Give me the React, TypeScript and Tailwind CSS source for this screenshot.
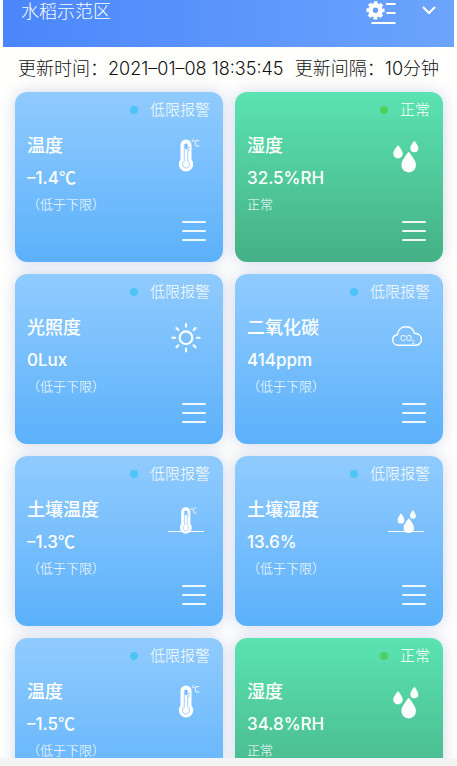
import React from "react";

type IconKind = "thermometer" | "drops" | "sun" | "co2" | "soilThermometer" | "soilDrops";

interface Sensor {
  id: number;
  name: string;
  value: string;
  unit: string;
  note: string;
  status: string;
  ok: boolean;
  icon: IconKind;
}

const sensors: Sensor[] = [
  { id: 1, name: "温度", value: "–1.4", unit: "℃", note: "（低于下限）", status: "低限报警", ok: false, icon: "thermometer" },
  { id: 2, name: "湿度", value: "32.5", unit: "%RH", note: "正常", status: "正常", ok: true, icon: "drops" },
  { id: 3, name: "光照度", value: "0", unit: "Lux", note: "（低于下限）", status: "低限报警", ok: false, icon: "sun" },
  { id: 4, name: "二氧化碳", value: "414", unit: "ppm", note: "（低于下限）", status: "低限报警", ok: false, icon: "co2" },
  { id: 5, name: "土壤温度", value: "–1.3", unit: "℃", note: "（低于下限）", status: "低限报警", ok: false, icon: "soilThermometer" },
  { id: 6, name: "土壤湿度", value: "13.6", unit: "%", note: "（低于下限）", status: "低限报警", ok: false, icon: "soilDrops" },
  { id: 7, name: "温度", value: "–1.5", unit: "℃", note: "（低于下限）", status: "低限报警", ok: false, icon: "thermometer" },
  { id: 8, name: "湿度", value: "34.8", unit: "%RH", note: "正常", status: "正常", ok: true, icon: "drops" },
];

function Thermometer() {
  return (
    <>
      <path d="M14.5 10a5.5 5.5 0 0 1 11 0v14.6a7.2 7.2 0 1 1-11 0z" fill="#fff" />
      <path d="M18.3 10.5a1.7 1.7 0 0 1 3.4 0v15.7a3.6 3.6 0 1 1-3.4 0z" fill="none" stroke="#78bdfb" strokeWidth="0.7" />
      <path d="M20 10v3" stroke="#78bdfb" strokeWidth="2.4" strokeLinecap="round" />
      <path d="M22 12.5h2M22 15h2" stroke="#78bdfb" strokeWidth="0.8" />
      <text x="25.5" y="11.2" fontSize="8" fill="#fff" className="font-['Noto_Sans_CJK_SC',sans-serif]">
        ℃
      </text>
    </>
  );
}

function SensorIcon({ kind }: { kind: IconKind }) {
  return (
    <svg viewBox="0 0 40 40" className="size-10" aria-hidden="true">
      {kind === "thermometer" && <Thermometer />}
      {kind === "soilThermometer" && (
        <>
          <path d="M2 32.5h36" stroke="#fff" strokeWidth="1.2" />
          <g transform="translate(3.2 4.4) scale(0.83)">
            <Thermometer />
          </g>
        </>
      )}
      {kind === "drops" && (
        <g fill="#fff">
          <path d="M12 10c1.6 2.2 4.7 5.6 4.7 8.7a4.7 4.7 0 0 1-9.4 0c0-3.1 3.1-6.5 4.7-8.7z" />
          <path d="M28.3 5.7c1.4 1.9 4 4.9 4 7.6a4 4 0 0 1-8 0c0-2.7 2.6-5.7 4-7.6z" />
          <path d="M22.7 16.7c2.5 3.4 7.3 8.7 7.3 13.4a7.3 7.3 0 0 1-14.6 0c0-4.7 4.8-10 7.3-13.4z" />
        </g>
      )}
      {kind === "soilDrops" && (
        <g fill="#fff">
          <path d="M2 32.5h36" stroke="#fff" strokeWidth="1.2" />
          <path d="M15 14.3c1.2 1.7 3.4 4.4 3.4 6.9a3.4 3.4 0 0 1-6.8 0c0-2.5 2.2-5.2 3.4-6.9z" />
          <path d="M26.9 11c1 1.4 2.9 3.7 2.9 5.8a2.9 2.9 0 0 1-5.8 0c0-2.1 1.9-4.4 2.9-5.8z" />
          <path d="M22.8 19.3c1.8 2.5 5.2 6.2 5.2 9.6a5.2 5.2 0 0 1-10.4 0c0-3.4 3.4-7.1 5.2-9.6z" />
        </g>
      )}
      {kind === "sun" && (
        <g fill="none" stroke="#fff" strokeWidth="2.1" strokeLinecap="round">
          <circle cx="20" cy="20.7" r="6.3" />
          <path d="M20 7v2.8M20 31.6v2.8M6.3 20.7h2.8M30.9 20.7h2.8M10.4 11.1l2 2M27.6 28.3l2 2M10.4 30.3l2-2M27.6 13.1l2-2" />
        </g>
      )}
      {kind === "co2" && (
        <>
          <path
            d="M12.5 28.3c-3.4 0-5.8-2.3-5.8-5.3 0-2.9 2-5 4.700-5.300C12 12.800 15.500 9.700 20 9.700c4.200 0 7.500 2.500 8.500 6.600 4 .1 6.900 2.600 6.900 6.100 0 3.400-2.600 5.900-6 5.900z"
            fill="none"
            stroke="#fff"
            strokeWidth="1.4"
          />
          <text x="14" y="24.2" fontSize="8" fill="#fff">CO</text>
          <text x="25.5" y="26.5" fontSize="5" fill="#fff">2</text>
        </>
      )}
    </svg>
  );
}

function SensorCard({ sensor }: { sensor: Sensor }) {
  const surface = sensor.ok ? "from-[#5be3b1] to-[#45b086]" : "from-[#90cbfe] to-[#5bb1fb]";
  return (
    <article
      className={`relative flex h-[170px] flex-col rounded-xl bg-linear-to-b pt-1.5 pr-[17px] pb-[21px] pl-3 text-white before:absolute before:inset-0 before:-z-10 before:rounded-xl before:shadow-[0_0_16px_rgba(80,100,190,0.26)] ${surface}`}
    >
      <p className="-mr-1 flex items-center justify-end gap-3 text-[15px] leading-6 font-light">
        <span className={`size-2 rounded-full ${sensor.ok ? "bg-[#4fd05c]" : "bg-[#4cc4f8]"}`} />
        {sensor.status}
      </p>
      <div className="flex flex-1 justify-between">
        <div className="pt-2">
          <h2 className="text-lg leading-8 font-medium">{sensor.name}</h2>
          <p className="text-[17px] leading-8 font-medium">
            {sensor.value}
            <span className={sensor.unit === "℃" ? "leading-none font-['Noto_Sans_CJK_SC',sans-serif]" : ""}>
              {sensor.unit}
            </span>
          </p>
          <p className="text-[13px] leading-5 font-light">{sensor.note}</p>
        </div>
        <div className="flex flex-col items-end justify-between pt-[13px]">
          <SensorIcon kind={sensor.icon} />
          <button type="button" aria-label={`${sensor.name}菜单`} className="flex w-6 flex-col gap-[7px]">
            <span className="h-0.5 w-full rounded bg-white/90" />
            <span className="h-0.5 w-full rounded bg-white/90" />
            <span className="h-0.5 w-full rounded bg-white/90" />
          </button>
        </div>
      </div>
    </article>
  );
}

export default function App() {
  return (
    <div className="flex h-screen flex-col bg-[#fffffd] font-['Inter','Noto_Sans_CJK_SC',sans-serif]">
      <header className="mx-[3px] flex h-[47px] shrink-0 items-start justify-between bg-linear-to-r from-[#4a86fb] to-[#6ca4fc] pr-4 pl-[18px] text-white">
        <h1 className="text-lg leading-6 font-light">水稻示范区</h1>
        <div className="flex items-start gap-6">
          <button type="button" aria-label="设置">
            <svg width="30" height="26" viewBox="0 0 30 26" fill="none" stroke="#fff" aria-hidden="true">
              <circle cx="9.5" cy="10.3" r="5" strokeWidth="4.6" />
              <circle cx="9.5" cy="10.3" r="7.7" strokeWidth="2.8" strokeDasharray="3.6 2.447" strokeDashoffset="1.8" />
              <path d="M20 4H29.5M20.5 13H29.5M5.5 23H29.5" strokeWidth="2.2" />
            </svg>
          </button>
          <button type="button" aria-label="展开">
            <svg width="18" height="20" viewBox="0 0 18 20" fill="none" stroke="#fff" strokeWidth="2" aria-hidden="true">
              <path d="M3 7l6 6 6-6" />
            </svg>
          </button>
        </div>
      </header>
      <main className="flex-1 overflow-hidden">
        <div className="flex justify-between px-[18px] pt-2.5 pb-[11px] text-lg leading-6 font-light whitespace-nowrap text-[#111]">
          <p>更新时间：2021–01–08 18:35:45</p>
          <p>更新间隔：10分钟</p>
        </div>
        <section className="isolate grid grid-cols-2 gap-3 pr-3.5 pl-[15px]">
          {sensors.map((sensor) => (
            <SensorCard key={sensor.id} sensor={sensor} />
          ))}
        </section>
      </main>
      <footer className="h-2 shrink-0 bg-[#f4f4f4]" />
    </div>
  );
}
